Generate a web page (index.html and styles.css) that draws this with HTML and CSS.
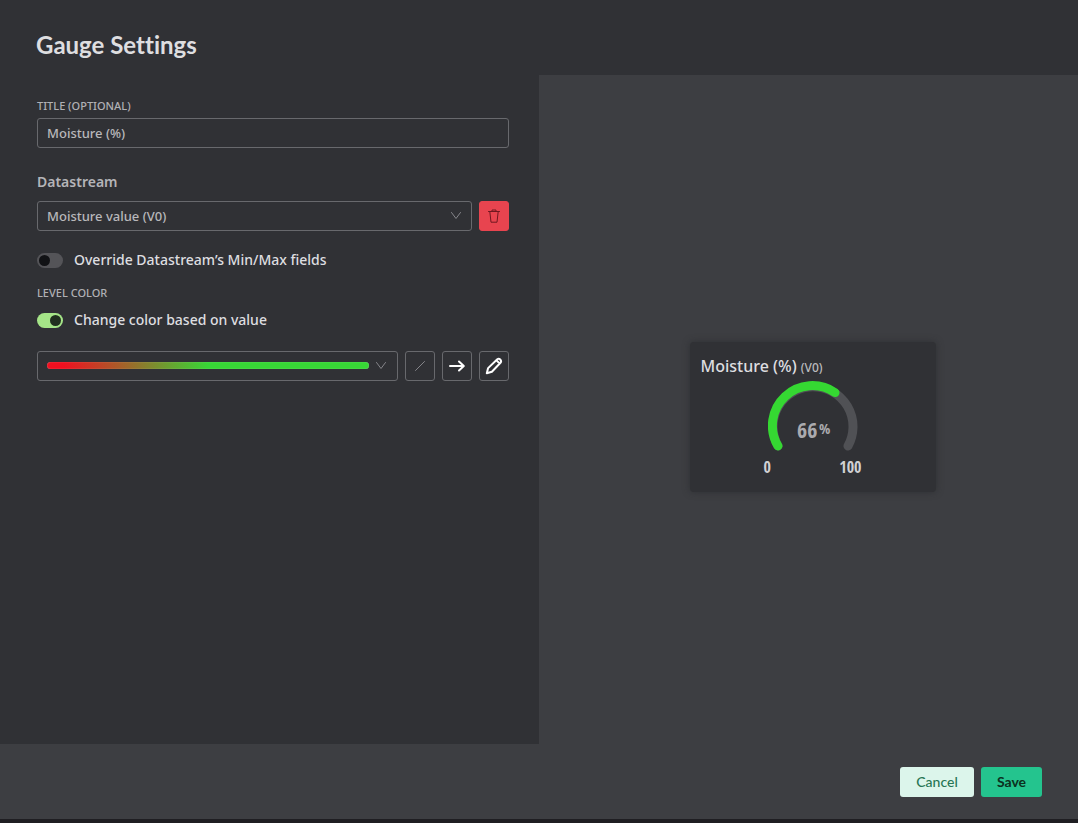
FILE: index.html
```html
<!DOCTYPE html>
<html lang="en">
<head>
<meta charset="utf-8">
<meta name="viewport" content="width=device-width, initial-scale=1">
<title>Gauge Settings</title>
<link rel="stylesheet" href="styles.css">
</head>
<body>
<main class="dialog">
  <header class="header"><h1 class="title">Gauge Settings</h1></header>
  <div class="content">
    <form class="settings" id="settings">
      <label class="caption" for="gauge-title">TITLE (OPTIONAL)</label>
      <input class="field" id="gauge-title" type="text" value="Moisture (%)">
      <label class="section-label" for="datastream">Datastream</label>
      <div class="row">
        <div class="select-wrap">
          <select class="field" id="datastream"><option>Moisture value (V0)</option></select>
          <svg class="chevron" viewBox="0 0 12 10"><path d="M1.5 1.5 6 7.5l4.5-6"/></svg>
        </div>
        <button class="icon-button danger" type="button" aria-label="Delete datastream">
          <svg viewBox="0 0 16 16" width="16" height="16"><path d="M2.5 3.5h11M6 3.5V2h4v1.5M3.8 3.5l1.2 10.7h6l1.2-10.7"/></svg>
        </button>
      </div>
      <label class="toggle"><input class="switch" type="checkbox">Override Datastream’s Min/Max fields</label>
      <p class="caption level">LEVEL COLOR</p>
      <label class="toggle active"><input class="switch" type="checkbox" checked>Change color based on value</label>
      <div class="row">
        <button class="picker" type="button" aria-label="Color gradient">
          <span class="gradient"></span>
          <svg class="picker-chevron" viewBox="0 0 12 10"><path d="M1.5 1.5 6 7.5l4.5-6"/></svg>
        </button>
        <button class="icon-button" type="button" aria-label="Smooth">
          <svg class="muted" viewBox="0 0 16 16" width="16" height="16"><path d="M3.5 12.5 12.5 3.5"/></svg>
        </button>
        <button class="icon-button" type="button" aria-label="Direction">
          <svg class="bold" viewBox="0 0 18 18" width="18" height="18"><path d="M2 9h13M11 4.5 15.8 9 11 13.5"/></svg>
        </button>
        <button class="icon-button" type="button" aria-label="Edit">
          <svg class="pencil" viewBox="0 0 18 18" width="18" height="18"><path d="m1.8 16.2 1.3-5.1L12.3 2.2c2-1.4 4.7 1.2 3.4 3.3L6.9 14.7ZM11.8 3.6l2.6 2.6"/></svg>
        </button>
      </div>
    </form>
    <section class="preview">
      <article class="card">
        <h2 class="card-title">Moisture (%) <span class="pin">(V0)</span></h2>
        <div class="gauge">
          <svg class="dial" viewBox="-45 -45 90 70" width="90" height="70">
            <path class="track" d="M-35 20A40 40 0 1 1 35 20"/>
            <path class="level-arc" d="M-35 20A40 40 0 0 1 22-33.4"/>
            <text class="value" x="-16" y="12">66</text>
            <text class="unit" x="6" y="8">%</text>
          </svg>
          <div class="range"><span>0</span><span>100</span></div>
        </div>
      </article>
    </section>
  </div>
  <footer class="footer">
    <button class="button cancel" type="button">Cancel</button>
    <button class="button save" type="submit" form="settings">Save</button>
  </footer>
</main>
</body>
</html>
```
FILE: styles.css
```css
* { box-sizing: border-box; }
body { margin: 0; background: #1f1e22; color: #dedee0; font-family: "Noto Sans", sans-serif; }
button, input, select { font: inherit; margin: 0; }
h1, h2, p { margin: 0; }
svg { display: block; fill: none; stroke: currentColor; stroke-linecap: round; stroke-linejoin: round; }
.dialog { min-height: 100vh; display: flex; flex-direction: column; background: #303135; border-bottom: 4px solid #1f1e22; }
.header { padding: 30px 36px 15px; }
.title { font: 700 24px/30px Lato, sans-serif; font-variant-ligatures: none; }
.content { flex: 1; display: grid; grid-template-columns: 1fr 1fr; }
.settings { padding: 24px 30px 24px 37px; display: flex; flex-direction: column; }
.caption { font-size: 11px; line-height: 14px; font-weight: 500; color: #b0b0b4; margin-bottom: 5px; }
.field { width: 100%; height: 30px; padding: 0 9px; border: 1px solid #68696d; border-radius: 3px; background: transparent; color: #b8b8bb; font-size: 13px; font-weight: 500; appearance: none; }
.section-label { font-size: 14px; line-height: 20px; font-weight: 600; color: #b4b4b8; margin: 24px 0 9px; }
.row { display: flex; gap: 7px; }
.select-wrap { flex: 1; position: relative; }
.chevron { position: absolute; right: 10px; top: 10px; width: 12px; height: 10px; color: #85858a; pointer-events: none; }
.icon-button { flex: none; width: 30px; height: 30px; padding: 0; display: grid; place-items: center; border: 1px solid #68696d; border-radius: 3px; background: transparent; color: #fff; }
.danger { background: #e8444f; border-color: #e8444f; color: #701820; }
.muted { color: #85858a; }
.bold, .pencil { stroke-width: 2; }
.toggle { display: flex; align-items: center; gap: 11px; font-size: 14px; line-height: 20px; font-weight: 500; margin: 19px 0 16px; }
.toggle.active { margin: 0 0 20px; }
.caption.level { margin-bottom: 10px; }
.toggle.active + .row { margin-top: 1px; }
.switch { appearance: none; width: 26px; height: 15px; padding: 2px; border-radius: 8px; background: #545458; display: flex; }
.switch::before { content: ""; width: 11px; height: 11px; border-radius: 50%; background: #111215; }
.switch:checked { background: #a5e588; justify-content: flex-end; }
.switch:checked::before { background: #20301f; }
.picker { flex: 1; height: 30px; padding: 0 10px 1px 9px; display: flex; align-items: center; gap: 6px; border: 1px solid #68696d; border-radius: 3px; background: transparent; color: #85858a; }
.gradient { flex: 1; height: 7px; border-radius: 4px; background: linear-gradient(90deg, #f01020 5%, #38d636 50%); box-shadow: inset 0 0 1px #ffffff99; }
.picker-chevron { width: 12px; height: 10px; }
.preview { display: grid; place-items: center; background: #3d3e42; padding: 14px 0 0 8px; }
.card { width: 246px; padding: 14px 11px; min-height: 150px; border-radius: 4px; background: #303135; box-shadow: 0 0 7px #25262a99; }
.card-title { font-size: 16px; line-height: 20px; font-weight: 500; }
.pin { font-size: 12px; color: #bbbbbe; }
.gauge { display: flex; flex-direction: column; align-items: center; padding-top: 3px; font-family: "Liberation Sans Narrow", "Open Sans Condensed", sans-serif; }
.track, .level-arc { stroke-width: 9; stroke: #505155; }
.level-arc { stroke: #35d832; }
.value, .unit { stroke: none; fill: #aaaaae; font-size: 22px; }
.unit { font-size: 15px; }
.range { width: 98px; display: flex; justify-content: space-between; font-size: 16px; line-height: 18px; padding-top: 7px; color: #d0d0d3; }
.footer { display: flex; justify-content: flex-end; gap: 7px; padding: 23px 36px 22px; background: #3d3e42; }
.button { height: 30px; padding: 0 0 1px; border: 0; border-radius: 3px; font: 500 14px/20px Lato, sans-serif; }
.cancel { background: #dcf5eb; color: #277654; min-width: 74px; }
.save { background: #24c48e; color: #0b3020; font-weight: 700; min-width: 61px; }
```
